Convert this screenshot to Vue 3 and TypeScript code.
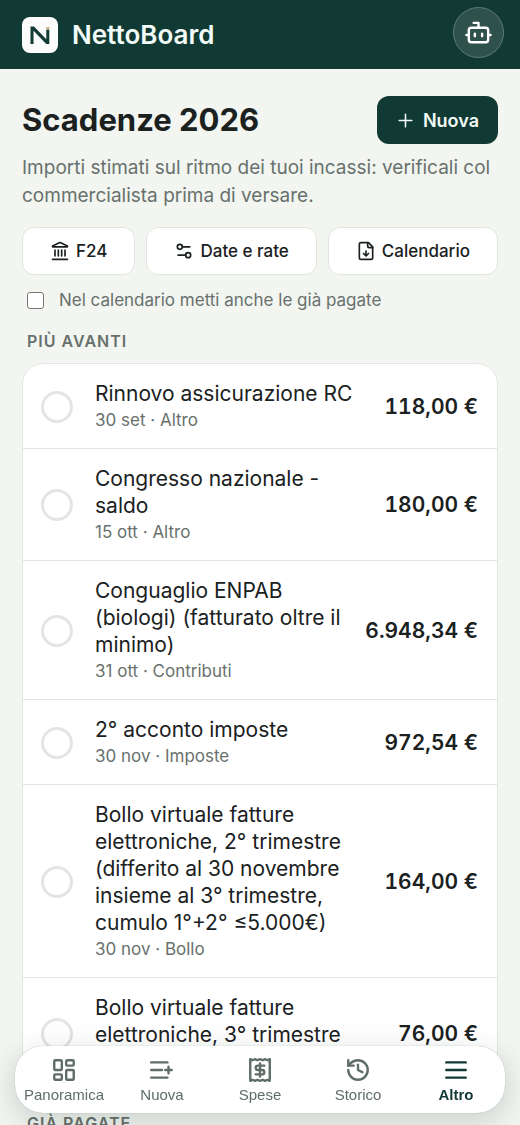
<script setup lang="ts">
import { ref } from 'vue'

interface Deadline {
  id: number
  title: string
  date: string
  kind: string
  amount: string
  done: boolean
}

interface Tab {
  label: string
  icon: string[]
}

const includePaid = ref(false)

const upcoming = ref<Deadline[]>([
  { id: 1, title: 'Rinnovo assicurazione RC', date: '30 set', kind: 'Altro', amount: '118,00 €', done: false },
  { id: 2, title: 'Congresso nazionale - saldo', date: '15 ott', kind: 'Altro', amount: '180,00 €', done: false },
  { id: 3, title: 'Conguaglio ENPAB (biologi) (fatturato oltre il minimo)', date: '31 ott', kind: 'Contributi', amount: '6.948,34 €', done: false },
  { id: 4, title: '2° acconto imposte', date: '30 nov', kind: 'Imposte', amount: '972,54 €', done: false },
  { id: 5, title: 'Bollo virtuale fatture elettroniche, 2° trimestre (differito al 30 novembre insieme al 3° trimestre, cumulo 1°+2° ≤5.000€)', date: '30 nov', kind: 'Bollo', amount: '164,00 €', done: false },
  { id: 6, title: 'Bollo virtuale fatture elettroniche, 3° trimestre', date: '30 nov', kind: 'Bollo', amount: '76,00 €', done: false },
])

const tabs: Tab[] = [
  {
    label: 'Panoramica',
    icon: [
      'M4 3h5a1 1 0 0 1 1 1v7a1 1 0 0 1-1 1H4a1 1 0 0 1-1-1V4a1 1 0 0 1 1-1z',
      'M15 3h5a1 1 0 0 1 1 1v3a1 1 0 0 1-1 1h-5a1 1 0 0 1-1-1V4a1 1 0 0 1 1-1z',
      'M15 12h5a1 1 0 0 1 1 1v7a1 1 0 0 1-1 1h-5a1 1 0 0 1-1-1v-7a1 1 0 0 1 1-1z',
      'M4 16h5a1 1 0 0 1 1 1v3a1 1 0 0 1-1 1H4a1 1 0 0 1-1-1v-3a1 1 0 0 1 1-1z',
    ],
  },
  { label: 'Nuova', icon: ['M17 5H2', 'M12 12H2', 'M17 19H2', 'M18 9v6', 'M21 12h-6'] },
  {
    label: 'Spese',
    icon: [
      'M3 2v20l2-1 2.5 1 2-1 2.5 1 2.5-1 2 1 2.5-1 2 1V2l-2 1-2.500-1-2 1-2.500-1-2.500 1-2-1-2.500 1Z',
      'M16 8h-6a2 2 0 1 0 0 4h4a2 2 0 1 1 0 4H8',
      'M12 18V6',
    ],
  },
  { label: 'Storico', icon: ['M3 12a9 9 0 1 0 9-9 9.75 9.75 0 0 0-6.74 2.74L3 8', 'M3 3v5h5', 'M12 7v5l4 2'] },
  { label: 'Altro', icon: ['M3 5h18', 'M3 12h18', 'M3 19h18'] },
]

const activeTab = ref('Altro')
</script>

<template>
  <div class="page">
    <header class="topbar">
      <a class="brand" href="#">
        <svg class="logo" viewBox="0 0 36 36" aria-hidden="true">
          <rect width="36" height="36" rx="8" fill="#fbfcfb" />
          <path d="M8.500 27V9.500h3.500L24.300 22.300V12.500h3V27h-3L11.500 13.800V27z" fill="#123a35" />
          <path d="M24.300 10h3v2.500h-3z" fill="#c9b183" />
        </svg>
        <span>NettoBoard</span>
      </a>
      <button class="assistant" type="button" aria-label="Assistente">
        <svg class="icon" viewBox="0 0 24 24" aria-hidden="true">
          <path d="M12 8V4H8" />
          <rect x="4" y="8" width="16" height="12" rx="2" />
          <path d="M2 14h2M20 14h2M15 13v2M9 13v2" />
        </svg>
      </button>
    </header>

    <main class="content">
      <div class="heading">
        <h1>Scadenze 2026</h1>
        <button class="primary" type="button">
          <svg class="icon" viewBox="0 0 24 24" aria-hidden="true"><path d="M4 12h16M12 4v16" /></svg>
          Nuova
        </button>
      </div>
      <p class="intro">Importi stimati sul ritmo dei tuoi incassi: verificali col commercialista prima di versare.</p>

      <div class="actions">
        <button type="button">
          <svg class="icon" viewBox="0 0 24 24" aria-hidden="true">
            <path d="M10 18v-7M14 18v-7M18 18v-7M6 18v-7M3 22h18" />
            <path d="M11.12 2.198a2 2 0 0 1 1.76.006l7.866 3.847c.476.233.31.949-.22.949H3.474c-.53 0-.695-.716-.22-.949z" />
          </svg>
          F24
        </button>
        <button type="button">
          <svg class="icon" viewBox="0 0 24 24" aria-hidden="true">
            <path d="M14 17H5M19 7h-9" />
            <circle cx="17" cy="17" r="3" />
            <circle cx="7" cy="7" r="3" />
          </svg>
          Date e rate
        </button>
        <button type="button">
          <svg class="icon" viewBox="0 0 24 24" aria-hidden="true">
            <path d="M15 2H6a2 2 0 0 0-2 2v16a2 2 0 0 0 2 2h12a2 2 0 0 0 2-2V7z" />
            <path d="M14 2v4a2 2 0 0 0 2 2h4M12 18v-6M9 15l3 3 3-3" />
          </svg>
          Calendario
        </button>
      </div>

      <label class="option">
        <input v-model="includePaid" type="checkbox" />
        <span>Nel calendario metti anche le già pagate</span>
      </label>

      <section>
        <h2>Più avanti</h2>
        <ul class="list">
          <li v-for="item in upcoming" :key="item.id">
            <input v-model="item.done" type="checkbox" :aria-label="`Segna come pagata: ${item.title}`" />
            <div class="details">
              <span class="title">{{ item.title }}</span>
              <span class="meta">{{ item.date }} · {{ item.kind }}</span>
            </div>
            <span class="amount">{{ item.amount }}</span>
          </li>
        </ul>
      </section>

      <section class="paid">
        <h2>Già pagate</h2>
      </section>
    </main>

    <nav class="tabbar" aria-label="Navigazione principale">
      <a
        v-for="tab in tabs"
        :key="tab.label"
        href="#"
        :class="{ active: tab.label === activeTab }"
        @click.prevent="activeTab = tab.label"
      >
        <svg class="icon" viewBox="0 0 24 24" aria-hidden="true">
          <path v-for="d in tab.icon" :key="d" :d="d" />
        </svg>
        <span>{{ tab.label }}</span>
      </a>
    </nav>
  </div>
</template>

<style>
html,
body {
  background: #f2f5f0;
}

html {
  height: 100%;
  overflow: hidden;
}

body {
  margin: 0;
  height: 100%;
  overflow: hidden auto;
  scrollbar-width: none;
}
</style>

<style scoped>
.page {
  color: #1a211e;
  font-family: Inter, "Liberation Sans", sans-serif;
}

button {
  font: inherit;
  cursor: pointer;
}

.icon {
  flex: none;
  fill: none;
  stroke: currentColor;
  stroke-width: 2;
  stroke-linecap: round;
  stroke-linejoin: round;
}

.topbar {
  display: flex;
  align-items: center;
  justify-content: space-between;
  box-sizing: border-box;
  height: 69px;
  padding: 0 16px 0 22px;
  background: #123a35;
}

.brand {
  display: flex;
  align-items: center;
  gap: 14px;
  color: #f3fbf8;
  font-size: 26px;
  font-weight: 600;
  line-height: 32px;
  text-decoration: none;
}

.logo {
  width: 36px;
  height: 36px;
}

.assistant {
  display: grid;
  place-items: center;
  width: 51px;
  height: 51px;
  margin-bottom: 5px;
  padding: 0;
  border: 1px solid #5c7c76;
  border-radius: 50%;
  background: #2f514c;
  color: #fff;
}

.assistant .icon {
  width: 29px;
  height: 29px;
}

.content {
  padding: 27px 22px 120px;
}

.heading {
  display: flex;
  align-items: center;
  justify-content: space-between;
}

h1 {
  margin: 0;
  font-size: 31px;
  font-weight: 700;
  line-height: 40px;
}

.primary {
  display: flex;
  align-items: center;
  gap: 8px;
  height: 48px;
  padding: 0 19px;
  border: 0;
  border-radius: 12px;
  background: #123a35;
  color: #f3fbf8;
  font-size: 18px;
  font-weight: 600;
}

.primary .icon {
  width: 19px;
  height: 19px;
}

.intro {
  margin: 10px 0 17px;
  color: #68716d;
  font-size: 19px;
  line-height: 28px;
}

.actions {
  display: flex;
  gap: 11px;
}

.actions button {
  display: flex;
  flex: 1 1 auto;
  align-items: center;
  justify-content: center;
  gap: 6px;
  height: 48px;
  padding: 0 19px;
  border: 1px solid #e1e5e1;
  border-radius: 12px;
  background: #fff;
  color: #1a211e;
  font-size: 17px;
  font-weight: 500;
}

.actions .icon {
  width: 20px;
  height: 20px;
}

.option {
  display: flex;
  align-items: center;
  gap: 15px;
  margin: 13px 5px 0;
  color: #68716d;
  font-size: 17px;
  line-height: 24px;
}

.option input {
  appearance: none;
  box-sizing: border-box;
  width: 17px;
  height: 17px;
  margin: 0;
  border: 1px solid #767676;
  border-radius: 3px;
  background: #fff;
}

.option input:checked {
  background: #123a35;
}

h2 {
  margin: 18px 5px 11px;
  color: #68716d;
  font-size: 16px;
  font-weight: 600;
  line-height: 22px;
  letter-spacing: 1px;
  text-transform: uppercase;
}

.list {
  margin: 0;
  padding: 0;
  border: 1px solid #e1e5e4;
  border-radius: 21px;
  background: #fff;
  list-style: none;
}

.list li {
  display: flex;
  align-items: center;
  gap: 22px;
  padding: 16px 19px 15px 18px;
}

.list li + li {
  border-top: 1px solid #e1e5e4;
}

.list input {
  appearance: none;
  flex: none;
  box-sizing: border-box;
  width: 32px;
  height: 32px;
  margin: 0;
  border: 3px solid #e3e4e4;
  border-radius: 50%;
}

.list input:checked {
  background: #123a35;
}

.details {
  display: flex;
  flex: 1;
  flex-direction: column;
  min-width: 0;
}

.title {
  font-size: 21px;
  line-height: 27px;
}

.meta {
  color: #68716d;
  font-size: 17px;
  line-height: 26px;
}

.amount {
  font-size: 21px;
  font-weight: 600;
  line-height: 28px;
  font-variant-numeric: tabular-nums;
  white-space: nowrap;
}

.paid {
  padding-top: 4px;
}

.tabbar {
  position: fixed;
  right: 15px;
  bottom: 12px;
  left: 15px;
  display: grid;
  grid-template-columns: repeat(5, 1fr);
  border-radius: 28px;
  background: #fff;
  box-shadow: 0 0 1px rgb(18 40 35 / 35%), 0 8px 30px rgb(18 40 35 / 18%);
  font-family: "Liberation Sans", Arial, sans-serif;
}

.tabbar a {
  display: flex;
  flex-direction: column;
  align-items: center;
  gap: 3px;
  padding: 11px 0 9px;
  color: #5f6d67;
  font-size: 15px;
  line-height: 18px;
  text-decoration: none;
}

.tabbar .icon {
  width: 26px;
  height: 26px;
  stroke-width: 2.2;
}

.tabbar .active {
  color: #123a35;
  font-weight: 700;
}
</style>
